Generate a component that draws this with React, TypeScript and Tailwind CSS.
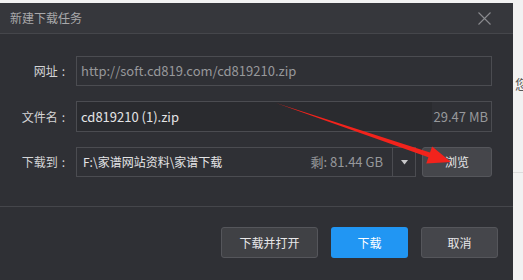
import React from "react";

const font = { fontFamily: '"Noto Sans CJK SC", "Noto Sans", sans-serif' };

function Label({ text }: { text: string }) {
  return (
    <div className="w-[70px] flex justify-end items-center pr-[5px] text-[12px] text-[#d4d4d6] leading-none">
      <span>{text}</span>
      <span className="ml-[4px]">:</span>
    </div>
  );
}

export default function App() {
  return (
    <div
      className="relative w-[523px] h-[280px] overflow-hidden bg-[#f2f2f2] flex flex-col"
      style={font}
    >
      <div className="h-[3px] bg-[#f2f2f2]" />
      <div className="flex flex-1">
        {/* dialog */}
        <div className="w-[513px] flex flex-col bg-[#2f3035]">
          {/* title bar */}
          <div className="h-[31px] bg-[#36373c] border-b border-[#45464b] flex items-center justify-between pl-[10px] pr-[22px]">
            <span className="text-[12px] text-[#a9a9ab] leading-none">新建下载任务</span>
            <svg width="13" height="13" viewBox="0 0 13 13" className="mt-[1px]">
              <path d="M0.5 0.5 L12.5 12.5 M12.5 0.5 L0.5 12.5" stroke="#8a8b8f" strokeWidth="1.1" />
            </svg>
          </div>
          {/* body */}
          <div className="flex flex-col pt-[22px] pr-[21px] gap-[15px] h-[173px] border-b border-[#45464b]">
            <div className="flex items-center h-[30px]">
              <Label text="网址" />
              <div className="ml-[6px] flex-1 h-[30px] border border-[#4b4c51] flex items-center pl-[4px] text-[13px] text-[#97989b]">
                http://soft.cd819.com/cd819210.zip
              </div>
            </div>
            <div className="flex items-center h-[31px]">
              <Label text="文件名" />
              <div className="ml-[6px] flex-1 h-[31px] border border-[#4b4c51] flex items-stretch">
                <div className="w-[355px] bg-[#2a2b2f] flex items-center pl-[4px] text-[13px] text-[#e4e4e6]">
                  cd819210 (1).zip
                </div>
                <div className="flex-1 flex items-center justify-end pr-[3px] text-[13px] text-[#97989b]">
                  29.47 MB
                </div>
              </div>
            </div>
            <div className="flex items-center h-[30px]">
              <Label text="下载到" />
              <div className="ml-[6px] w-[340px] h-[30px] border border-[#4b4c51] flex items-stretch">
                <div className="flex-1 flex items-center justify-between pl-[6px] pr-[9px]">
                  <span className="text-[12px] text-[#e4e4e6]">F:\家谱网站资料\家谱下载</span>
                  <span className="text-[13px] text-[#97989b]">剩: 81.44 GB</span>
                </div>
                <div className="w-[23px] border-l border-[#4b4c51] flex items-center justify-center">
                  <svg width="7" height="5" viewBox="0 0 7 5">
                    <path d="M0 0 L7 0 L3.5 4.5 Z" fill="#c8c8ca" />
                  </svg>
                </div>
              </div>
              <button className="ml-[6px] w-[70px] h-[30px] rounded-[3px] bg-[#45464b] border border-[#55565b] text-[12px] text-[#e8e8ea] flex items-center justify-center">
                浏览
              </button>
            </div>
          </div>
          {/* footer */}
          <div className="flex justify-end gap-[13px] pt-[20px] pr-[15px]">
            <button className="w-[97px] h-[31px] rounded-[3px] bg-[#404145] border border-[#55565b] text-[12px] text-[#e8e8ea] flex items-center justify-center">
              下载并打开
            </button>
            <button className="w-[77px] h-[31px] rounded-[3px] bg-[#2196f3] text-[12px] text-white flex items-center justify-center">
              下载
            </button>
            <button className="w-[77px] h-[31px] rounded-[3px] bg-[#45464b] border border-[#55565b] text-[12px] text-[#e8e8ea] flex items-center justify-center">
              取消
            </button>
          </div>
        </div>
        {/* outside area */}
        <div className="flex-1 overflow-hidden flex flex-col">
          <div className="h-[74px]" />
          <div className="text-[13px] text-[#555] leading-none pl-[2px] whitespace-nowrap">您</div>
          <div className="h-[82px]" />
          <div className="h-px bg-[#dcdcdc]" />
        </div>
      </div>
      {/* red annotation arrow */}
      <svg
        className="absolute left-0 top-0 pointer-events-none"
        width="523"
        height="280"
        viewBox="0 0 523 280"
      >
        <polygon
          points="276,103 430,152.5 432.1,146.4 451,162 426.3,163.4 428.4,157.3"
          fill="#f2231c"
        />
      </svg>
    </div>
  );
}
